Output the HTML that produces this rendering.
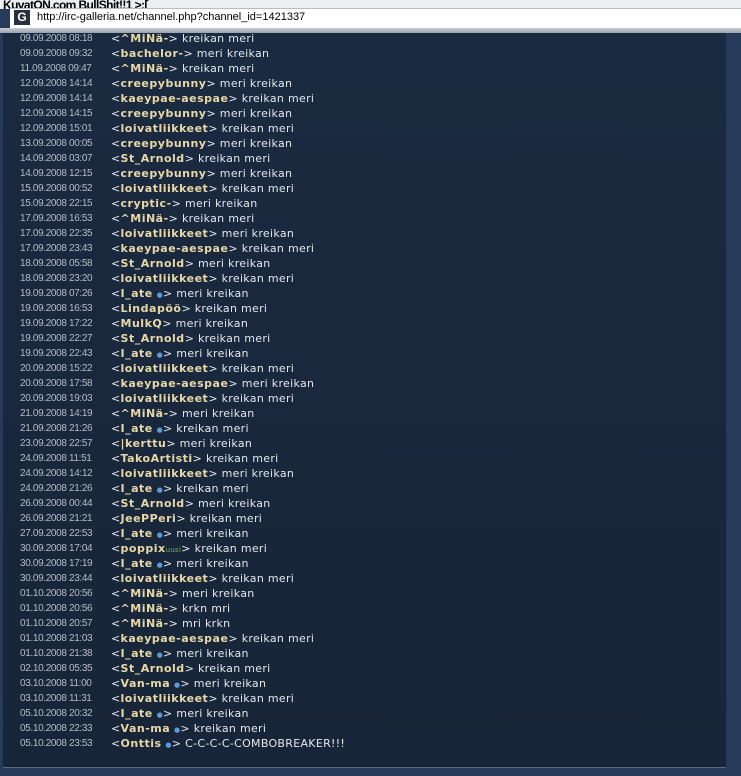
<!DOCTYPE html>
<html><head><meta charset="utf-8"><style>
body{margin:0;width:741px;height:776px;overflow:hidden;background:#263a5a;position:relative;font-family:"DejaVu Sans",sans-serif}
#top{position:absolute;left:0;top:0;width:741px;height:9px;background:#eceef2}
#t{position:absolute;left:3px;top:-2px;font:bold 12px "Liberation Sans",sans-serif;color:#000;letter-spacing:-0.6px}
#addr{position:absolute;left:10px;top:8px;width:731px;height:19px;background:#fff;border-top:1px solid #b8bcc4;border-bottom:1px solid #b8bcc4}
#g{position:absolute;left:14px;top:10px;width:16px;height:15px;background:#2a3040;color:#fff;font:bold 12px "Liberation Sans";text-align:center;line-height:15px}
#url{position:absolute;left:37px;top:11px;font:11px "Liberation Sans",sans-serif;color:#000}
#sh{position:absolute;left:0;top:28px;width:741px;height:5px;background:linear-gradient(#c8ccd2,#9aa2ae)}
#panel{position:absolute;left:3px;top:33px;width:723px;height:734px;background:linear-gradient(#1a2a40,#182538);border-bottom:1px solid #5a6a84}
.r{position:absolute;left:0;height:15px;line-height:15px;white-space:nowrap;font-size:11px;color:#e4e8ee}
.d{position:absolute;left:20px;font:10px/15px "Liberation Sans",sans-serif;color:#b4bcc8;top:0;letter-spacing:-0.35px}
.m{position:absolute;left:111px;letter-spacing:0.3px}
b{color:#e8d8a8;font-weight:bold;letter-spacing:0.5px}
i{font-style:normal;color:#5b9bd8;font-size:7px}
s{text-decoration:none;color:#6cc040;font-size:7px}
</style></head><body>
<div id="top"></div><div id="t">KuvatON.com BullShit!!1 &gt;:[</div>
<div id="addr"></div><div id="g">G</div><div id="url">http://irc-galleria.net/channel.php?channel_id=1421337</div>
<div id="sh"></div>
<div id="panel"></div>
<div id="rows"></div>
<script>
var d=[["09.09.2008 08:18","^MiNä-","kreikan meri"],["09.09.2008 09:32","bachelor-","meri kreikan"],["11.09.2008 09:47","^MiNä-","kreikan meri"],["12.09.2008 14:14","creepybunny","meri kreikan",1],["12.09.2008 14:14","kaeypae-aespae","kreikan meri",1],["12.09.2008 14:15","creepybunny","meri kreikan",1],["12.09.2008 15:01","loivatliikkeet","kreikan meri",1],["13.09.2008 00:05","creepybunny","meri kreikan",1],["14.09.2008 03:07","St_Arnold","kreikan meri",1],["14.09.2008 12:15","creepybunny","meri kreikan",1],["15.09.2008 00:52","loivatliikkeet","kreikan meri",1],["15.09.2008 22:15","cryptic-","meri kreikan"],["17.09.2008 16:53","^MiNä-","kreikan meri"],["17.09.2008 22:35","loivatliikkeet","meri kreikan",1],["17.09.2008 23:43","kaeypae-aespae","kreikan meri",1],["18.09.2008 05:58","St_Arnold","meri kreikan",1],["18.09.2008 23:20","loivatliikkeet","kreikan meri",1],["19.09.2008 07:26","I_ate","meri kreikan",2],["19.09.2008 16:53","Lindapöö","kreikan meri",1],["19.09.2008 17:22","MulkQ","meri kreikan",1],["19.09.2008 22:27","St_Arnold","kreikan meri",1],["19.09.2008 22:43","I_ate","meri kreikan",2],["20.09.2008 15:22","loivatliikkeet","kreikan meri",1],["20.09.2008 17:58","kaeypae-aespae","meri kreikan",1],["20.09.2008 19:03","loivatliikkeet","kreikan meri",1],["21.09.2008 14:19","^MiNä-","meri kreikan"],["21.09.2008 21:26","I_ate","kreikan meri",2],["23.09.2008 22:57","|kerttu","meri kreikan",1],["24.09.2008 11:51","TakoArtisti","kreikan meri",1],["24.09.2008 14:12","loivatliikkeet","meri kreikan",1],["24.09.2008 21:26","I_ate","kreikan meri",2],["26.09.2008 00:44","St_Arnold","meri kreikan",1],["26.09.2008 21:21","JeePPeri","kreikan meri",1],["27.09.2008 22:53","I_ate","meri kreikan",2],["30.09.2008 17:04","poppix","kreikan meri",3],["30.09.2008 17:19","I_ate","meri kreikan",2],["30.09.2008 23:44","loivatliikkeet","kreikan meri",1],["01.10.2008 20:56","^MiNä-","meri kreikan"],["01.10.2008 20:56","^MiNä-","krkn mri"],["01.10.2008 20:57","^MiNä-","mri krkn"],["01.10.2008 21:03","kaeypae-aespae","kreikan meri",1],["01.10.2008 21:38","I_ate","meri kreikan",2],["02.10.2008 05:35","St_Arnold","kreikan meri",1],["03.10.2008 11:00","Van-ma","meri kreikan",2],["03.10.2008 11:31","loivatliikkeet","kreikan meri",1],["05.10.2008 20:32","I_ate","meri kreikan",2],["05.10.2008 22:33","Van-ma","kreikan meri",2],["05.10.2008 23:53","Onttis","C-C-C-C-COMBOBREAKER!!!",2]];
var h="";d.forEach(function(x,i){var t=x[3]==2?' <i>●</i>':x[3]==3?'<s>uusi</s>':'';
h+='<div class="r" style="top:'+(31+15*i)+'px"><span class="d">'+x[0]+'</span><span class="m">&lt;<b>'+x[1]+'</b>'+t+'&gt; '+x[2]+'</span></div>';});
document.getElementById('rows').innerHTML=h;
</script>
</body></html>
